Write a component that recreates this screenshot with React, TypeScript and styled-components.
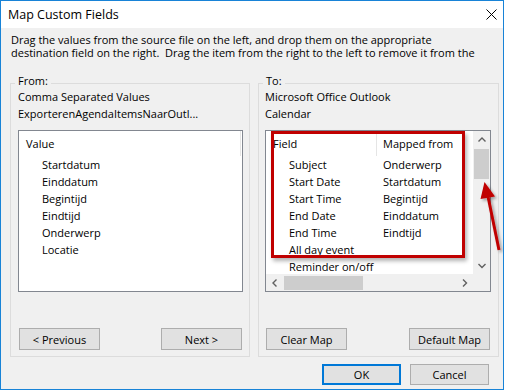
import React from 'react';
import styled, { createGlobalStyle } from 'styled-components';

const Global = createGlobalStyle`
  html, body { margin: 0; padding: 0; background: #ffffff; }
  body { font-family: "Open Sans", "Noto Sans", sans-serif; font-size: 11px; color: #000; }
  * { box-sizing: border-box; }
`;

const Window = styled.div`
  position: relative;
  width: 504px;
  height: 390px;
  border: 1px solid #1883d7;
  background: #f0f0f0;
  display: flex;
  flex-direction: column;
  overflow: hidden;
`;

const TitleBar = styled.div`
  height: 27px;
  flex: none;
  background: #ffffff;
  display: flex;
  align-items: center;
  justify-content: space-between;
  padding: 0 6px 0 7px;
`;

const Title = styled.div`
  font-size: 12.5px;
  line-height: 27px;
`;

const Instructions = styled.div`
  padding: 5px 10px 0 10px;
  display: flex;
  flex-direction: column;
`;

const InstructionLine = styled.div`
  height: 13px;
  line-height: 13px;
  white-space: nowrap;
`;

const GroupsRow = styled.div`
  display: flex;
  gap: 8px;
  margin-top: 24px;
  padding-left: 9px;
`;

const Group = styled.div<{ $w: number; $pad: number }>`
  position: relative;
  width: ${(p) => p.$w}px;
  height: 274px;
  border: 1px solid #dcdcdc;
  padding: 4px 0 6px ${(p) => p.$pad}px;
  display: flex;
  flex-direction: column;
`;

const GroupLabel = styled.div`
  position: absolute;
  top: -10px;
  left: 4px;
  padding: 0 3px;
  line-height: 13px;
  background: #f0f0f0;
`;

const InfoLine = styled.div`
  line-height: 17px;
  white-space: nowrap;
`;

const ListFrame = styled.div<{ $w: number }>`
  position: relative;
  width: ${(p) => p.$w}px;
  height: 162px;
  margin-top: 8px;
  border: 1px solid #828790;
  background: #ffffff;
`;

const ListGrid = styled.div`
  display: grid;
  grid-template-columns: 1fr 17px;
  grid-template-rows: 1fr 17px;
  width: 100%;
  height: 100%;
`;

const ListContent = styled.div`
  overflow: hidden;
  min-height: 0;
`;

const HeaderRow = styled.div`
  display: flex;
  height: 25px;
  line-height: 25px;
`;

const HeaderCell = styled.div<{ $w?: number; $pad: number }>`
  ${(p) => (p.$w ? `width: ${p.$w}px; border-right: 1px solid #e5e5e5;` : 'flex: 1;')}
  height: 25px;
  padding-left: ${(p) => p.$pad}px;
  white-space: nowrap;
`;

const Row = styled.div`
  display: flex;
  height: 17px;
  line-height: 17px;
  white-space: nowrap;
`;

const Cell = styled.div<{ $w?: number; $pad: number }>`
  ${(p) => (p.$w ? `width: ${p.$w}px;` : 'flex: 1;')}
  padding-left: ${(p) => p.$pad}px;
`;

const VScroll = styled.div`
  background: #f0f0f0;
  display: flex;
  flex-direction: column;
`;

const HScroll = styled.div`
  background: #f0f0f0;
  display: flex;
  align-items: stretch;
`;

const Corner = styled.div`
  background: #f0f0f0;
`;

const ArrowBtn = styled.div`
  width: 17px;
  height: 17px;
  flex: none;
  display: flex;
  align-items: center;
  justify-content: center;
`;

const VTrack = styled.div`
  flex: 1;
  padding: 1px 1px 0 1px;
`;

const VThumb = styled.div`
  height: 30px;
  background: #cdcdcd;
`;

const HTrack = styled.div`
  flex: 1;
  padding: 2px 0 1px 1px;
`;

const HThumb = styled.div`
  width: 79px;
  height: 100%;
  background: #cdcdcd;
`;

const Highlight = styled.div`
  position: absolute;
  left: 5px;
  top: 0;
  width: 194px;
  height: 127px;
  border: 3px solid #c00000;
  box-shadow: 2px 3px 4px rgba(0, 0, 0, 0.3);
  pointer-events: none;
`;

const ButtonRow = styled.div<{ $w: number }>`
  margin-top: auto;
  margin-left: 1px;
  width: ${(p) => p.$w}px;
  display: flex;
  justify-content: space-between;
`;

const Button = styled.div<{ $w: number; $h: number; $default?: boolean }>`
  width: ${(p) => p.$w}px;
  height: ${(p) => p.$h}px;
  background: #e1e1e1;
  border: 1px solid ${(p) => (p.$default ? '#0078d7' : '#adadad')};
  box-shadow: ${(p) => (p.$default ? 'inset 0 0 0 1px #0078d7' : 'none')};
  display: flex;
  align-items: center;
  justify-content: center;
  white-space: nowrap;
  line-height: 13px;
`;

const DialogButtons = styled.div`
  display: flex;
  justify-content: flex-end;
  gap: 9px;
  margin-top: 7px;
  padding-right: 14px;
`;

const Overlay = styled.svg`
  position: absolute;
  left: -1px;
  top: -1px;
  pointer-events: none;
`;

const Chevron = ({ dir }: { dir: 'up' | 'down' | 'left' | 'right' }) => {
  const pts: Record<string, string> = {
    up: '0.5,4.5 4,1 7.5,4.5',
    down: '0.5,1 4,4.5 7.5,1',
    left: '4.5,0.5 1,4 4.5,7.5',
    right: '1,0.5 4.5,4 1,7.5',
  };
  const vertical = dir === 'up' || dir === 'down';
  return (
    <svg width={vertical ? 8 : 6} height={vertical ? 6 : 8}>
      <polyline points={pts[dir]} fill="none" stroke="#606060" strokeWidth={1.4} />
    </svg>
  );
};

const leftItems = ['Startdatum', 'Einddatum', 'Begintijd', 'Eindtijd', 'Onderwerp', 'Locatie'];

const rightRows: [string, string][] = [
  ['Subject', 'Onderwerp'],
  ['Start Date', 'Startdatum'],
  ['Start Time', 'Begintijd'],
  ['End Date', 'Einddatum'],
  ['End Time', 'Eindtijd'],
  ['All day event', ''],
  ['Reminder on/off', ''],
];

export default function App() {
  return (
    <>
      <Global />
      <Window>
        <TitleBar>
          <Title>Map Custom Fields</Title>
          <svg width="11" height="11" viewBox="0 0 11 11">
            <path d="M0.5 0.5 L10.5 10.5 M10.5 0.5 L0.5 10.5" stroke="#000" strokeWidth="1" />
          </svg>
        </TitleBar>
        <Instructions>
          <InstructionLine>
            Drag the values from the source file on the left, and drop them on the appropriate
          </InstructionLine>
          <InstructionLine>
            destination field on the right.&nbsp; Drag the item from the right to the left to remove it from the
          </InstructionLine>
        </Instructions>
        <GroupsRow>
          <Group $w={240} $pad={7}>
            <GroupLabel>From:</GroupLabel>
            <InfoLine>Comma Separated Values</InfoLine>
            <InfoLine>ExporterenAgendaItemsNaarOutl...</InfoLine>
            <ListFrame $w={225}>
              <HeaderRow>
                <HeaderCell $w={222} $pad={7}>Value</HeaderCell>
              </HeaderRow>
              {leftItems.map((t) => (
                <Row key={t}>
                  <Cell $pad={23}>{t}</Cell>
                </Row>
              ))}
            </ListFrame>
            <ButtonRow $w={223}>
              <Button $w={81} $h={22}>&lt; Previous</Button>
              <Button $w={81} $h={22}>Next &gt;</Button>
            </ButtonRow>
          </Group>
          <Group $w={241} $pad={6}>
            <GroupLabel>To:</GroupLabel>
            <InfoLine>Microsoft Office Outlook</InfoLine>
            <InfoLine>Calendar</InfoLine>
            <ListFrame $w={226}>
              <ListGrid>
                <ListContent>
                  <HeaderRow>
                    <HeaderCell $w={111} $pad={7}>Field</HeaderCell>
                    <HeaderCell $pad={6}>Mapped from</HeaderCell>
                  </HeaderRow>
                  {rightRows.map(([a, b]) => (
                    <Row key={a}>
                      <Cell $w={111} $pad={23}>{a}</Cell>
                      <Cell $pad={6}>{b}</Cell>
                    </Row>
                  ))}
                </ListContent>
                <VScroll>
                  <ArrowBtn><Chevron dir="up" /></ArrowBtn>
                  <VTrack>
                    <VThumb />
                  </VTrack>
                  <ArrowBtn><Chevron dir="down" /></ArrowBtn>
                </VScroll>
                <HScroll>
                  <ArrowBtn><Chevron dir="left" /></ArrowBtn>
                  <HTrack>
                    <HThumb />
                  </HTrack>
                  <ArrowBtn><Chevron dir="right" /></ArrowBtn>
                </HScroll>
                <Corner />
              </ListGrid>
              <Highlight />
            </ListFrame>
            <ButtonRow $w={224}>
              <Button $w={81} $h={22}>Clear Map</Button>
              <Button $w={81} $h={22}>Default Map</Button>
            </ButtonRow>
          </Group>
        </GroupsRow>
        <DialogButtons>
          <Button $w={79} $h={21} $default>OK</Button>
          <Button $w={79} $h={21}>Cancel</Button>
        </DialogButtons>
        <Overlay width="504" height="390" viewBox="0 0 504 390">
          <defs>
            <filter id="sh" x="-50%" y="-50%" width="200%" height="200%">
              <feDropShadow dx="2" dy="2" stdDeviation="1.5" floodColor="#000" floodOpacity="0.35" />
            </filter>
          </defs>
          <g filter="url(#sh)">
            <line x1="499" y1="250" x2="487.7" y2="195" stroke="#c00000" strokeWidth="3" />
            <polygon points="484.5,182 495,196.5 480.5,199" fill="#c00000" />
          </g>
        </Overlay>
      </Window>
    </>
  );
}
